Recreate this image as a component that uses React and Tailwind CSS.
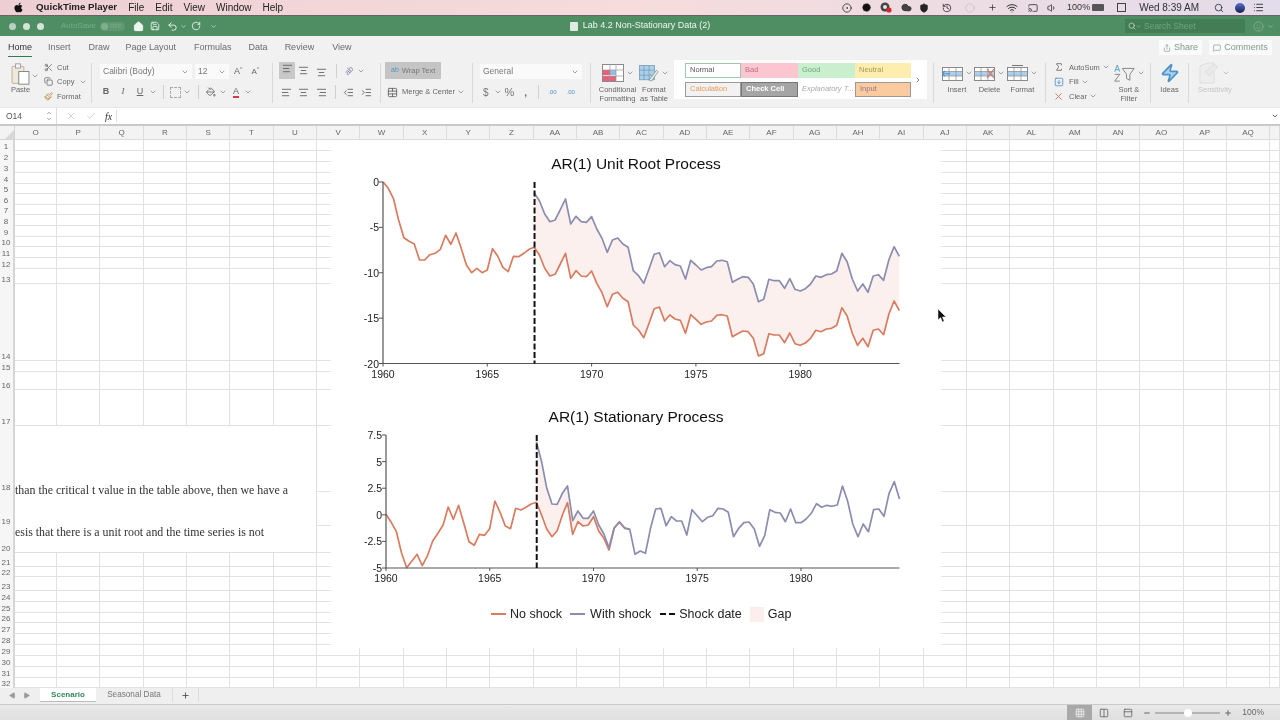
import React from 'react';
import { FaApple } from 'react-icons/fa';
import {
  ChevronDown,
  ChevronRight,
  ChevronUp,
  Scissors,
  Copy,
  Paintbrush,
  PaintBucket,
  AlignLeft,
  AlignCenter,
  AlignRight,
  Home,
  Save,
  Undo2,
  RotateCw,
  Search,
  Smile,
  Share,
  MessageSquare,
  X,
  Check,
  Wifi,
  Cast,
  Volume1,
  History,
  Shield,
  Cloud,
  Circle,
  CircleDot,
  List,
  Plus,
  Minus,
  Zap,
  Sigma,
  SquareArrowDown,
  Play,
  Grid3x3,
  Columns2,
  PanelTop,
  IndentIncrease,
  IndentDecrease,
  TableCellsMerge,
} from 'lucide-react';

const Chev = ({ className = '' }) => (
  <ChevronDown size={8} strokeWidth={2} className={`shrink-0 text-[#777] ${className}`} />
);

const Sep = () => <div className="w-px h-[40px] self-center shrink-0 bg-[#d9d9d9]" />;
const MiniSep = () => <div className="w-px h-[14px] shrink-0 bg-[#d0d0d0]" />;

/* ---------- ribbon glyphs ---------- */

const PasteIcon = () => (
  <svg width="21" height="22" viewBox="0 0 22 26" fill="none">
    <rect x="1" y="4" width="14" height="20" rx="1" fill="#efe9dc" stroke="#b9a98c" />
    <rect x="5" y="1" width="6" height="5" fill="#f4f4f4" stroke="#9a9a9a" />
    <rect x="9" y="10" width="12" height="15" fill="#fff" stroke="#777" />
  </svg>
);

const TableIcon = ({ fill = '#8fc1e6', accent = '#e8607a' }) => (
  <svg width="22" height="18" viewBox="0 0 22 18" fill="none">
    <rect x="0.5" y="0.5" width="21" height="17" fill="#fff" stroke="#8a8a8a" />
    <rect x="1" y="6" width="7" height="5" fill={accent} />
    <rect x="1" y="12" width="7" height="5" fill={accent} />
    <rect x="8" y="6" width="6" height="5" fill={fill} />
    <rect x="8" y="12" width="6" height="5" fill={accent} />
    <path d="M0 6H22M0 12H22M8 0V18M14 0V18" stroke="#9a9a9a" strokeWidth="0.7" />
  </svg>
);

const FormatTableIcon = () => (
  <svg width="20" height="17" viewBox="0 0 24 20" fill="none">
    <rect x="0.5" y="0.5" width="18" height="17" fill="#a9d0ee" stroke="#7f9fb8" />
    <path d="M0 6H19M0 12H19M6 0V18M12 0V18" stroke="#6f8ba0" strokeWidth="0.7" />
    <path d="M12 18L21 6L23 8L15 19Z" fill="#e9e9e9" stroke="#6f8f78" strokeWidth="0.8" />
  </svg>
);

const CellsIcon = ({ mark }) => (
  <svg width="21" height="17" viewBox="0 0 21 17" fill="none">
    <rect x="0.5" y="2.5" width="20" height="13" fill="#fff" stroke="#8a8a8a" />
    <rect x="1" y="6.5" width="19" height="4.5" fill="#a9d0ee" />
    <path d="M0 6.5H21M0 11H21M7 2V16M14 2V16" stroke="#8a8a8a" strokeWidth="0.7" />
    {mark === 'x' && <path d="M13 4L20 13M20 4L13 13" stroke="#d9705f" strokeWidth="1.2" />}
    {mark === 'in' && <path d="M0 8.7H8M3 6L0 8.7L3 11.4" stroke="#4d93c9" strokeWidth="1.1" />}
    {mark === 'top' && <path d="M5 0.5H16" stroke="#777" />}
  </svg>
);

const SortIcon = () => (
  <svg width="22" height="19" viewBox="0 0 26 22" fill="none">
    <path d="M2 9L5 1L8 9M3 6.5H7" stroke="#4d93c9" strokeWidth="1" />
    <path d="M2 12H8L2 20H8" stroke="#777" strokeWidth="1" />
    <path d="M11 5H25L20 12V19L16 17V12Z" stroke="#777" strokeWidth="1" />
  </svg>
);

const SensitivityIcon = () => (
  <svg width="20" height="22" viewBox="0 0 20 22" fill="none" opacity="0.35">
    <path d="M1 4L9 1H15V21H1Z" fill="#e8e8e8" stroke="#bbb" />
    <path d="M6 10L15 2L19 5L10 14Z" fill="#ddd" stroke="#bbb" />
  </svg>
);

const CreativeCloudIcon = () => (
  <svg width="12" height="11" viewBox="0 0 12 11">
    <circle cx="5" cy="5" r="4.5" fill="#444" />
    <circle cx="5" cy="5" r="2" fill="#eadfe6" />
    <circle cx="9" cy="8" r="2.6" fill="#d8252c" />
  </svg>
);

const StyleCell = ({ className, children }) => (
  <div className={`h-[15px] px-1 flex items-center text-[7.5px] truncate ${className}`}>{children}</div>
);

const SmallAction = ({ icon, label, chev, slot = 'w-[15px]', chevGap = 'ml-1' }) => (
  <div className="h-[14.5px] flex items-center text-[7.5px] text-[#666]">
    <span className={`${slot} flex justify-center shrink-0`}>{icon}</span>
    <span className="ml-[1px]">{label}</span>
    {chev && <Chev className={chevGap} />}
  </div>
);

const StackAction = ({ icon, chev, lines, className = '' }) => (
  <div className={`flex flex-col items-center text-[7.5px] leading-[9px] text-[#666] ${className}`}>
    <div className="h-[22px] flex items-center gap-[2px]">
      {icon}
      {chev && <Chev />}
    </div>
    <div className="mt-[1px] text-center whitespace-nowrap">
      {lines.map((l) => (
        <div key={l}>{l}</div>
      ))}
    </div>
  </div>
);

/* ---------- top chrome ---------- */

const MenuBar = () => (
  <div className="h-[16px] shrink-0 flex items-center border-b border-[#6b6166] bg-gradient-to-r from-[#edcfd3] via-[#f6dcdc] to-[#e3dcea] text-[10px] text-[#222] pl-[13px]">
    <FaApple size={11} className="text-[#111]" />
    <span className="ml-[12px] font-bold text-[9.7px]">QuickTime Player</span>
    <span className="ml-[11px]">File</span>
    <span className="ml-[11px]">Edit</span>
    <span className="ml-[11px]">View</span>
    <span className="ml-[11px]">Window</span>
    <span className="ml-[11px]">Help</span>
    <div className="ml-auto flex items-center text-[#333]">
      <span className="w-[20px] flex justify-center"><CircleDot size={10} /></span>
      <span className="w-[18px] flex justify-center"><Circle size={9} fill="#111" /></span>
      <span className="w-[22px] flex justify-center"><CreativeCloudIcon /></span>
      <span className="w-[18px] flex justify-center"><Cloud size={11} fill="#444" /></span>
      <span className="w-[18px] flex justify-center"><Shield size={10} fill="#222" /></span>
      <span className="w-[28px] flex justify-center"><History size={10} /></span>
      <span className="w-[18px] flex justify-center"><Circle size={10} className="text-[#c9c3cc]" /></span>
      <span className="w-[26px] flex justify-center"><Plus size={9} /></span>
      <span className="w-[14px] flex justify-center"><Wifi size={12} /></span>
      <span className="w-[28px] flex justify-center"><Cast size={10} /></span>
      <span className="w-[10px] flex justify-center"><Volume1 size={10} /></span>
      <span className="ml-[10px] text-[9px]">100%</span>
      <span className="ml-[2px] w-[12px] h-[7px] bg-[#555] rounded-[1px]" />
      <span className="ml-[13px] w-[9px] h-[9px] border border-[#444]" />
      <span className="ml-[13px] text-[10px] whitespace-nowrap">Wed 8:39 AM</span>
      <span className="ml-[15px]"><Search size={10} /></span>
      <span className="ml-[11px] w-[10px] h-[10px] rounded-full bg-gradient-to-b from-[#5b6fd6] to-[#1b1f4a]" />
      <span className="ml-[8px] mr-[16px]"><List size={11} /></span>
    </div>
  </div>
);

const TitleBar = () => (
  <div className="h-[20px] shrink-0 grid grid-cols-[1fr_auto_1fr] items-center bg-[#4f8e63] text-[#eef5f0]">
    <div className="flex items-center pl-[9px]">
      <span className="w-[7px] h-[7px] rounded-full bg-[#b9d0c0]" />
      <span className="ml-[7px] w-[7px] h-[7px] rounded-full bg-[#d5e3d9]" />
      <span className="ml-[7px] w-[7px] h-[7px] rounded-full bg-[#d5e3d9]" />
      <span className="ml-[17px] text-[8px] text-[#78ab87]">AutoSave</span>
      <span className="ml-[4px] w-[25px] h-[9px] rounded-full bg-[#5f9872] flex items-center pl-[1px]">
        <span className="w-[7px] h-[7px] rounded-full bg-[#7fae8e]" />
        <span className="ml-[2px] text-[6px] text-[#7fae8e]">OFF</span>
      </span>
      <Home size={11} className="ml-[8px]" fill="#eef5f0" />
      <Save size={10} className="ml-[6px]" />
      <Undo2 size={11} className="ml-[7px]" />
      <ChevronDown size={7} className="ml-[2px]" />
      <RotateCw size={10} className="ml-[4px]" />
      <ChevronDown size={7} className="ml-[9px]" />
    </div>
    <div className="flex items-center text-[9px]">
      <span className="w-[8px] h-[9px] bg-[#dfeae3] rounded-[1px]" />
      <span className="ml-[5px] whitespace-nowrap">Lab 4.2 Non-Stationary Data (2)</span>
    </div>
    <div className="flex items-center justify-end pr-[6px]">
      <div className="w-[120px] h-[14px] bg-[#437d55] flex items-center pl-[3px] text-[8.5px] text-[#6ea481]">
        <Search size={8} className="text-[#d5e3d9]" />
        <ChevronDown size={5} className="text-[#d5e3d9]" />
        <span className="ml-[3px]">Search Sheet</span>
      </div>
      <Smile size={11} className="ml-[8px] text-[#7fae8e]" />
      <ChevronDown size={7} className="ml-[3px] text-[#a9c9b4]" />
    </div>
  </div>
);

const RibbonTabs = () => (
  <div className="h-[22px] shrink-0 flex items-center bg-[#f1f1f1] text-[9px] text-[#6b6b6b] pl-[8px] pt-[1px]">
    <span className="relative text-[#333]">
      Home
      <span className="absolute left-0 right-0 -bottom-[3px] h-[1.5px] bg-[#2f7d4f]" />
    </span>
    <span className="ml-[16px]">Insert</span>
    <span className="ml-[18px]">Draw</span>
    <span className="ml-[16px]">Page Layout</span>
    <span className="ml-[18px]">Formulas</span>
    <span className="ml-[17px]">Data</span>
    <span className="ml-[17px]">Review</span>
    <span className="ml-[18px]">View</span>
    <div className="ml-auto flex items-center pr-[8px]">
      <div className="h-[15px] w-[43px] bg-[#fafafa] flex items-center justify-center text-[#7c9c88]">
        <Share size={8} className="mr-[3px]" />
        Share
      </div>
      <div className="ml-[7px] h-[15px] w-[63px] bg-[#fafafa] flex items-center justify-center text-[#7c9c88]">
        <MessageSquare size={8} className="mr-[3px]" />
        Comments
      </div>
    </div>
  </div>
);

const Combo = ({ className, children }) => (
  <div className={`h-[15px] bg-[#fafafa] flex items-center justify-between px-[3px] text-[8.5px] text-[#777] ${className}`}>
    <span>{children}</span>
    <Chev />
  </div>
);

const Slot = ({ className = 'w-[12px]', children }) => (
  <span className={`flex justify-center shrink-0 ${className}`}>{children}</span>
);

const Ribbon = () => (
  <div className="h-[49px] shrink-0 flex bg-[#f1f1f1] text-[#666]">
    {/* clipboard */}
    <div className="w-[91px] shrink-0 flex pl-[10px] pt-[2px]">
      <div className="flex flex-col items-center text-[7.5px] w-[21px] pt-[3px]">
        <PasteIcon />
        <span className="leading-[9px]">Paste</span>
      </div>
      <Chev className="mt-[12px]" />
      <div className="flex flex-col ml-[2px]">
        <SmallAction icon={<Scissors size={9} />} label="Cut" />
        <SmallAction icon={<Copy size={9} />} label="Copy" chev />
        <SmallAction icon={<Paintbrush size={9} className="text-[#b8873a]" />} label="Format" />
      </div>
    </div>
    <Sep />

    {/* font */}
    <div className="w-[180px] shrink-0 flex flex-col pl-[8px] pt-[6px]">
      <div className="flex items-center">
        <Combo className="w-[92px]">Calibri (Body)</Combo>
        <Combo className="w-[34px] ml-[3px]">12</Combo>
        <span className="ml-[5px] text-[9px]">A<sup className="text-[5px]">^</sup></span>
        <span className="ml-[9px] text-[8px]">A<sup className="text-[5px]">^</sup></span>
      </div>
      <div className="flex items-center mt-[6px] text-[9px] h-[14px]">
        <Slot><b>B</b></Slot>
        <Slot className="w-[22px]"><i className="font-['Liberation_Serif',serif]">I</i></Slot>
        <Slot><u>U</u></Slot>
        <Chev className="ml-[3px]" />
        <span className="ml-[6px]"><MiniSep /></span>
        <Slot className="w-[11px] ml-[6px]"><span className="w-[11px] h-[11px] border border-dashed border-[#aaa]" /></Slot>
        <Chev className="ml-[2px]" />
        <span className="ml-[7px]"><MiniSep /></span>
        <Slot className="w-[12px] ml-[6px]"><PaintBucket size={10} /></Slot>
        <Chev className="ml-[2px]" />
        <Slot className="w-[12px] ml-[3px]"><span className="leading-[10px] border-b-2 border-[#d8354a]">A</span></Slot>
        <Chev className="ml-[2px]" />
      </div>
    </div>
    <Sep />

    {/* alignment */}
    <div className="w-[107px] shrink-0 flex flex-col pl-[6px] pt-[4px]">
      <div className="flex items-center h-[17px]">
        <span className="w-[16px] h-[17px] bg-[#c8c8c8] flex justify-center items-start pt-[1px]"><AlignLeft size={11} /></span>
        <span className="ml-[3px]"><AlignCenter size={11} /></span>
        <span className="ml-[7px]"><AlignCenter size={11} className="mt-[4px]" /></span>
        <span className="ml-[9px]"><MiniSep /></span>
        <span className="ml-[8px] -rotate-45 text-[8px] text-[#8a7ab0]">ab</span>
        <Chev className="ml-[3px]" />
      </div>
      <div className="flex items-center mt-[6px] h-[14px] pl-[2px]">
        <AlignLeft size={11} />
        <AlignCenter size={11} className="ml-[6px]" />
        <AlignRight size={11} className="ml-[7px]" />
        <span className="ml-[8px]"><MiniSep /></span>
        <IndentDecrease size={11} className="ml-[7px]" />
        <IndentIncrease size={11} className="ml-[7px]" />
      </div>
    </div>
    <Sep />

    {/* wrap and merge */}
    <div className="w-[91px] shrink-0 flex flex-col pl-[4px] pt-[4px]">
      <div className="w-[56px] h-[17px] bg-[#c4c4c4] flex items-center pl-[6px] text-[7.5px] text-[#777]">
        <span className="text-[7px] text-[#4d93c9]">ab</span>
        <span className="ml-[3px]">Wrap Text</span>
      </div>
      <div className="flex items-center mt-[6px] h-[14px] text-[7.5px] pl-[2px]">
        <TableCellsMerge size={11} className="shrink-0" />
        <span className="ml-[4px] whitespace-nowrap">Merge &amp; Center</span>
        <Chev className="ml-[2px]" />
      </div>
    </div>
    <Sep />

    {/* number */}
    <div className="w-[117px] shrink-0 flex flex-col pl-[7px] pt-[6px]">
      <Combo className="w-[102px]">General</Combo>
      <div className="flex items-center mt-[6px] h-[14px] text-[10px] text-[#777]">
        <span className="ml-[3px]">$</span>
        <Chev className="ml-[5px]" />
        <span className="ml-[3px] text-[11px]">%</span>
        <span className="ml-[10px] font-bold">,</span>
        <span className="ml-[11px]"><MiniSep /></span>
        <span className="ml-[9px] text-[6px] text-[#4d93c9]">.00</span>
        <span className="ml-[10px] text-[6px] text-[#4d93c9]">.00</span>
      </div>
    </div>
    <Sep />

    {/* styles */}
    <div className="w-[342px] shrink-0 flex pt-[4px]">
      <StackAction
        className="w-[37px] ml-[8px]"
        icon={<TableIcon />}
        chev
        lines={['Conditional', 'Formatting']}
      />
      <StackAction className="w-[32px] ml-[2px]" icon={<FormatTableIcon />} chev lines={['Format', 'as Table']} />
      <div className="ml-[4px] mt-[-2px] w-[253px] h-[39px] bg-white flex items-center pl-[11px]">
        <div className="grid grid-cols-[56px_57px_57px_56px] gap-y-[4px]">
          <StyleCell className="bg-white border border-[#9ec9a8] text-[#555]">Normal</StyleCell>
          <StyleCell className="bg-[#fbc6d0] text-[#c0707f]">Bad</StyleCell>
          <StyleCell className="bg-[#c9efce] text-[#6fa87a]">Good</StyleCell>
          <StyleCell className="bg-[#fdeeb0] text-[#a89a55]">Neutral</StyleCell>
          <StyleCell className="bg-[#f2f2f2] border border-[#9a9a9a] text-[#e79a5e]">Calculation</StyleCell>
          <StyleCell className="bg-[#a5a5a5] border border-[#777] text-white font-bold">Check Cell</StyleCell>
          <StyleCell className="bg-white italic text-[#aaa]">Explanatory T...</StyleCell>
          <StyleCell className="bg-[#fbcb9f] border border-[#999] text-[#8a7a8f]">Input</StyleCell>
        </div>
        <ChevronRight size={8} className="ml-[3px] text-[#555]" />
      </div>
    </div>
    <Sep />

    {/* cells */}
    <div className="w-[111px] shrink-0 flex pt-[4px] pl-[7px]">
      <StackAction className="w-[32px]" icon={<CellsIcon mark="in" />} chev lines={['Insert']} />
      <StackAction className="w-[33px]" icon={<CellsIcon mark="x" />} chev lines={['Delete']} />
      <StackAction className="w-[33px]" icon={<CellsIcon mark="top" />} chev lines={['Format']} />
    </div>
    <Sep />

    {/* editing */}
    <div className="w-[104px] shrink-0 flex pl-[3px] pt-[2px]">
      <div className="flex flex-col">
        <SmallAction slot="w-[19px]" chevGap="ml-[2px]" icon={<Sigma size={10} />} label="AutoSum" chev />
        <SmallAction slot="w-[19px]" chevGap="ml-[2px]" icon={<SquareArrowDown size={10} className="text-[#4d93c9]" />} label="Fill" chev />
        <SmallAction slot="w-[19px]" chevGap="ml-[2px]" icon={<X size={11} className="text-[#d9705f]" />} label="Clear" chev />
      </div>
      <StackAction className="ml-[3px] mt-[2px]" icon={<SortIcon />} chev lines={['Sort &', 'Filter']} />
    </div>
    <Sep />

    {/* ideas */}
    <div className="w-[37px] shrink-0 flex justify-center pt-[4px]">
      <StackAction icon={<Zap size={20} className="text-[#4d93c9]" fill="#a9d0ee" />} lines={['Ideas']} />
    </div>
    <Sep />

    {/* sensitivity */}
    <div className="flex-1 flex pl-[9px] pt-[4px]">
      <div className="flex flex-col items-center text-[7.5px] leading-[9px] text-[#c4c4c4]">
        <div className="h-[22px] flex items-center gap-[3px]">
          <SensitivityIcon />
          <Chev className="opacity-60" />
        </div>
        <div className="mt-[1px]">Sensitivity</div>
      </div>
    </div>
  </div>
);

const FormulaBar = () => (
  <div className="h-[19px] shrink-0 flex items-center bg-white border-t border-[#e6e6e6] border-b-2 border-b-[#c9c9c9] text-[#555]">
    <div className="w-[57px] h-full flex items-center justify-between border-r border-[#dcdcdc] pl-[6px] pr-[4px] text-[8.5px]">
      <span>O14</span>
      <span className="flex flex-col text-[#888]">
        <ChevronUp size={6} strokeWidth={3} />
        <ChevronDown size={6} strokeWidth={3} />
      </span>
    </div>
    <X size={10} className="ml-[9px] text-[#c8c8c8]" />
    <Check size={10} className="ml-[10px] text-[#c8c8c8]" />
    <span className="ml-[9px] italic text-[10px] font-['Liberation_Serif',serif] text-[#333]">fx</span>
    <span className="ml-[4px] w-px h-[12px] bg-[#dedede]" />
    <ChevronDown size={8} strokeWidth={3} className="ml-auto mr-[1px] text-[#666]" />
  </div>
);

/* ---------- sheet ---------- */

const COLS = ['O', 'P', 'Q', 'R', 'S', 'T', 'U', 'V', 'W', 'X', 'Y', 'Z', 'AA', 'AB', 'AC', 'AD', 'AE', 'AF', 'AG', 'AH', 'AI', 'AJ', 'AK', 'AL', 'AM', 'AN', 'AO', 'AP', 'AQ', ''];
const ROW_COUNT = 32;
const MERGE_START = 18;
const MERGE_END = 20;

const Sheet = () => {
  const rows = [];
  for (let r = 1; r <= ROW_COUNT; r++) {
    rows.push(
      <div key={`h${r}`} className="bg-[#f6f6f6] border-r-2 border-[#d6d6d6] flex items-end justify-center text-[8px] leading-[8px] text-[#666] pr-[1px]">
        {r}
      </div>
    );
    if (r === MERGE_START) {
      rows.push(
        <div key="merged" className="col-span-7 row-span-3 bg-white border-r border-b border-[#dedede] overflow-hidden font-['Liberation_Serif',serif] text-[11.9px] text-[#333] whitespace-nowrap">
          <div className="mt-[57px] h-[14px] leading-[14px]">than the critical t value in the table above, then we have a</div>
          <div className="mt-[28px] h-[14px] leading-[14px]">esis that there is a unit root and the time series is not</div>
        </div>
      );
    }
    COLS.forEach((c, i) => {
      if (r >= MERGE_START && r <= MERGE_END && i < 7) return;
      rows.push(<div key={`${r}-${c}`} className="border-r border-b border-[#e2e2e2]" />);
    });
  }

  return (
    <div className="relative h-[562px] shrink-0 bg-white">
      <div className="grid h-full grid-cols-[15px_42px_repeat(28,43.33px)_1fr] grid-rows-[14px_11px_11px_11px_11px_10px_11px_10px_11px_11px_10px_11px_11px_15px_77px_11px_18px_36px_66px_34px_27px_14px_10px_14px_11px_11px_10px_11px_11px_11px_11px_11px_10px]">
        <div className="bg-[#f3f3f3] border-b border-r border-[#d4d4d4] flex items-end justify-end">
          <span className="w-0 h-0 border-l-[9px] border-l-transparent border-b-[9px] border-b-[#d8d8d8]" />
        </div>
        {COLS.map((c) => (
          <div key={c || 'end'} className="bg-[#f3f3f3] border-b border-r border-[#dcdcdc] flex items-center justify-center pt-[1px] text-[8px] text-[#666]">
            {c}
          </div>
        ))}
        {rows}
      </div>

      {/* chart object floating over the sheet */}
      <div className="absolute left-[331px] top-[14px] w-[610px] h-[508px] bg-white flex flex-col">
        <Charts />
      </div>
    </div>
  );
};

/* ---------- charts (values read off as pixel rows) ---------- */

const UNIT_ROOT = [35, 55, 85, 150, 203, 214, 222, 270, 270, 254, 250, 238, 196, 223, 189, 235, 285, 308, 295, 308, 300, 236, 258, 292, 305, 259, 260, 250, 238, 232, 255, 295, 318, 313, 282, 250, 325, 302, 318, 320, 303, 340, 368, 410, 373, 367, 385, 395, 465, 480, 503, 460, 416, 411, 453, 435, 447, 451, 490, 434, 448, 463, 456, 453, 436, 434, 438, 500, 491, 483, 485, 505, 558, 551, 491, 495, 495, 518, 489, 521, 526, 519, 505, 481, 485, 477, 475, 466, 413, 438, 490, 526, 505, 530, 481, 477, 494, 432, 393, 422];
const SHOCK_I = 29;
const UNIT_GAP = 163;

const STAT_NO = [268, 292, 320, 385, 428, 408, 388, 422, 392, 348, 325, 300, 246, 283, 241, 295, 350, 361, 328, 331, 311, 228, 262, 303, 311, 250, 255, 247, 237, 232, 270, 313, 335, 317, 270, 233, 328, 290, 303, 300, 275, 318, 340, 375, 310, 292, 310, 313];
const STAT_SHOCK = [50, 110, 190, 237, 238, 205, 183, 287, 258, 280, 280, 258, 300, 327, 368, 308, 290, 308, 313, 388, 378, 385, 310, 252, 250, 302, 275, 288, 288, 330, 254, 272, 290, 277, 272, 250, 252, 262, 335, 310, 293, 291, 312, 364, 332, 254, 262, 264, 290, 252, 293, 293, 282, 265, 236, 247, 241, 244, 240, 183, 228, 297, 335, 297, 320, 254, 252, 274, 205, 170, 222];

const RED = '#d87b5f';
const BLUE = '#8a8cb0';
const GAP = '#fcf0ee';

const toPath = (pts) => pts.map(([x, y]) => `${x.toFixed(1)},${y.toFixed(1)}`).join(' ');

const Chart = ({ height, x0, step, yTop, yBottom, yLabels, xLabelY, no, shock, shockStart, gapLen }) => {
  const px = (i) => x0 + step * i;
  const py = (v) => v / 3 - 5;
  const noPts = no.map((v, i) => [px(i), py(v)]);
  const shockPts = shock.map((v, i) => [px(i + shockStart), py(v)]);
  const gapTop = shockPts.slice(0, gapLen);
  const gapBottom = noPts.slice(shockStart, shockStart + gapLen).reverse();
  const axisEnd = 568.5;
  const dashX = px(shockStart) + 0.3;

  return (
    <svg width="610" height={height} className="block shrink-0">
      <polygon points={toPath([...gapTop, ...gapBottom])} fill={GAP} />
      <polyline points={toPath(noPts)} fill="none" stroke={RED} strokeWidth="1.7" strokeLinejoin="round" />
      <polyline points={toPath(shockPts)} fill="none" stroke={BLUE} strokeWidth="1.7" strokeLinejoin="round" />
      <path d={`M${x0} ${yTop}V${yBottom}H${axisEnd}`} fill="none" stroke="#555" strokeWidth="1.2" />
      <line x1={dashX} x2={dashX} y1={yTop} y2={yBottom} stroke="#111" strokeWidth="2" strokeDasharray="6 2.5" />
      {yLabels.map((label, i) => {
        const y = yTop + ((yBottom - yTop) * i) / (yLabels.length - 1);
        return (
          <g key={label}>
            <line x1={x0 - 4} x2={x0} y1={y} y2={y} stroke="#555" />
            <text x={x0 - 4} y={y + 4} textAnchor="end" className="text-[10.5px] fill-[#222]">
              {label}
            </text>
          </g>
        );
      })}
      {[1960, 1965, 1970, 1975, 1980].map((yr, i) => {
        const x = px(i * 20);
        return (
          <g key={yr}>
            <line x1={x} x2={x} y1={yBottom} y2={yBottom + 3} stroke="#555" />
            <text x={x} y={xLabelY} textAnchor="middle" className="text-[10.5px] fill-[#222]">
              {yr}
            </text>
          </g>
        );
      })}
    </svg>
  );
};

const Charts = () => (
  <>
    <div className="mt-[15px] h-[18px] leading-[18px] text-center text-[15.5px] text-[#111]">AR(1) Unit Root Process</div>
    <div className="mt-[2px]">
      <Chart
        height={210}
        x0={52}
        step={5.215}
        yTop={7}
        yBottom={188.5}
        yLabels={['0', '-5', '-10', '-15', '-20']}
        xLabelY={203}
        no={UNIT_ROOT}
        shock={UNIT_ROOT.slice(SHOCK_I).map((v) => v - UNIT_GAP)}
        shockStart={SHOCK_I}
        gapLen={71}
      />
    </div>
    <div className="mt-[23px] h-[18px] leading-[18px] text-center text-[15.5px] text-[#111]">AR(1) Stationary Process</div>
    <div className="mt-[4px]">
      <Chart
        height={160}
        x0={55}
        step={5.187}
        yTop={5}
        yBottom={138}
        yLabels={['7.5', '5', '2.5', '0', '-2.5', '-5']}
        xLabelY={152}
        no={STAT_NO}
        shock={STAT_SHOCK}
        shockStart={SHOCK_I}
        gapLen={19}
      />
    </div>
    <div className="mt-[16px] h-[16px] flex items-center pl-[160px] text-[12.5px] text-[#222]">
      <span className="w-[15px] h-[2px] bg-[#d87b5f]" />
      <span className="ml-[4px]">No shock</span>
      <span className="ml-[8px] w-[15px] h-[2px] bg-[#8a8cb0]" />
      <span className="ml-[5px]">With shock</span>
      <span className="ml-[9px] w-[15px] h-[2px] bg-[linear-gradient(90deg,#111_0_40%,transparent_40%_60%,#111_60%_100%)]" />
      <span className="ml-[4px]">Shock date</span>
      <span className="ml-[8px] w-[14px] h-[15px] bg-[#fdeeee]" />
      <span className="ml-[4px]">Gap</span>
    </div>
  </>
);

/* ---------- bottom ---------- */

const SheetTabs = () => (
  <div className="h-[17px] shrink-0 flex items-start bg-[#efefef] border-b border-[#c9c9c9] text-[8.2px] text-[#777]">
    <Play size={7} fill="#999" className="ml-[9px] mt-[4px] rotate-180 text-[#999]" />
    <Play size={7} fill="#999" className="ml-[7px] mt-[4px] text-[#999]" />
    <div className="ml-[10px] w-[56px] h-[14px] bg-white border-b border-[#bbb] flex items-center justify-center font-bold text-[8px] text-[#2f8b57]">Scenario</div>
    <div className="w-[77px] h-[14px] flex items-center justify-center border-r border-[#dcdcdc]">Seasonal Data</div>
    <div className="w-[26px] h-[14px] flex items-center justify-center border-r border-[#dcdcdc]">
      <Plus size={9} strokeWidth={2.5} className="text-[#555]" />
    </div>
  </div>
);

const StatusBar = () => (
  <div className="h-[15px] shrink-0 flex items-center justify-end bg-gradient-to-b from-[#e9e9e9] to-[#dfdfdf] text-[#666] pr-[16px] text-[8.5px]">
    <div className="w-[25px] h-full bg-[#a9a9a9] flex items-center justify-center text-[#eee]">
      <Grid3x3 size={10} />
    </div>
    <Columns2 size={10} className="ml-[7px]" />
    <PanelTop size={10} className="ml-[14px]" />
    <Minus size={8} strokeWidth={3} className="ml-[10px]" />
    <div className="relative ml-[4px] w-[65px] h-[2px] bg-[#b5b5b5]">
      <span className="absolute left-[29px] -top-[3px] w-[8px] h-[8px] rounded-full bg-white" />
    </div>
    <Plus size={8} strokeWidth={3} className="ml-[4px]" />
    <span className="ml-[10px]">100%</span>
  </div>
);

const Cursor = () => (
  <svg width="10" height="14" viewBox="0 0 10 14" className="absolute left-[937px] top-[309px]">
    <path d="M1 0V11L3.6 8.6L5.4 13L7.2 12.2L5.4 8H9Z" fill="#111" stroke="#fff" strokeWidth="0.5" />
  </svg>
);

export default function App() {
  return (
    <div className="relative w-[1280px] h-[720px] overflow-hidden flex flex-col bg-white blur-[0.35px] font-['Liberation_Sans',Arial,sans-serif]">
      <MenuBar />
      <TitleBar />
      <RibbonTabs />
      <Ribbon />
      <FormulaBar />
      <Sheet />
      <SheetTabs />
      <StatusBar />
      <Cursor />
    </div>
  );
}
